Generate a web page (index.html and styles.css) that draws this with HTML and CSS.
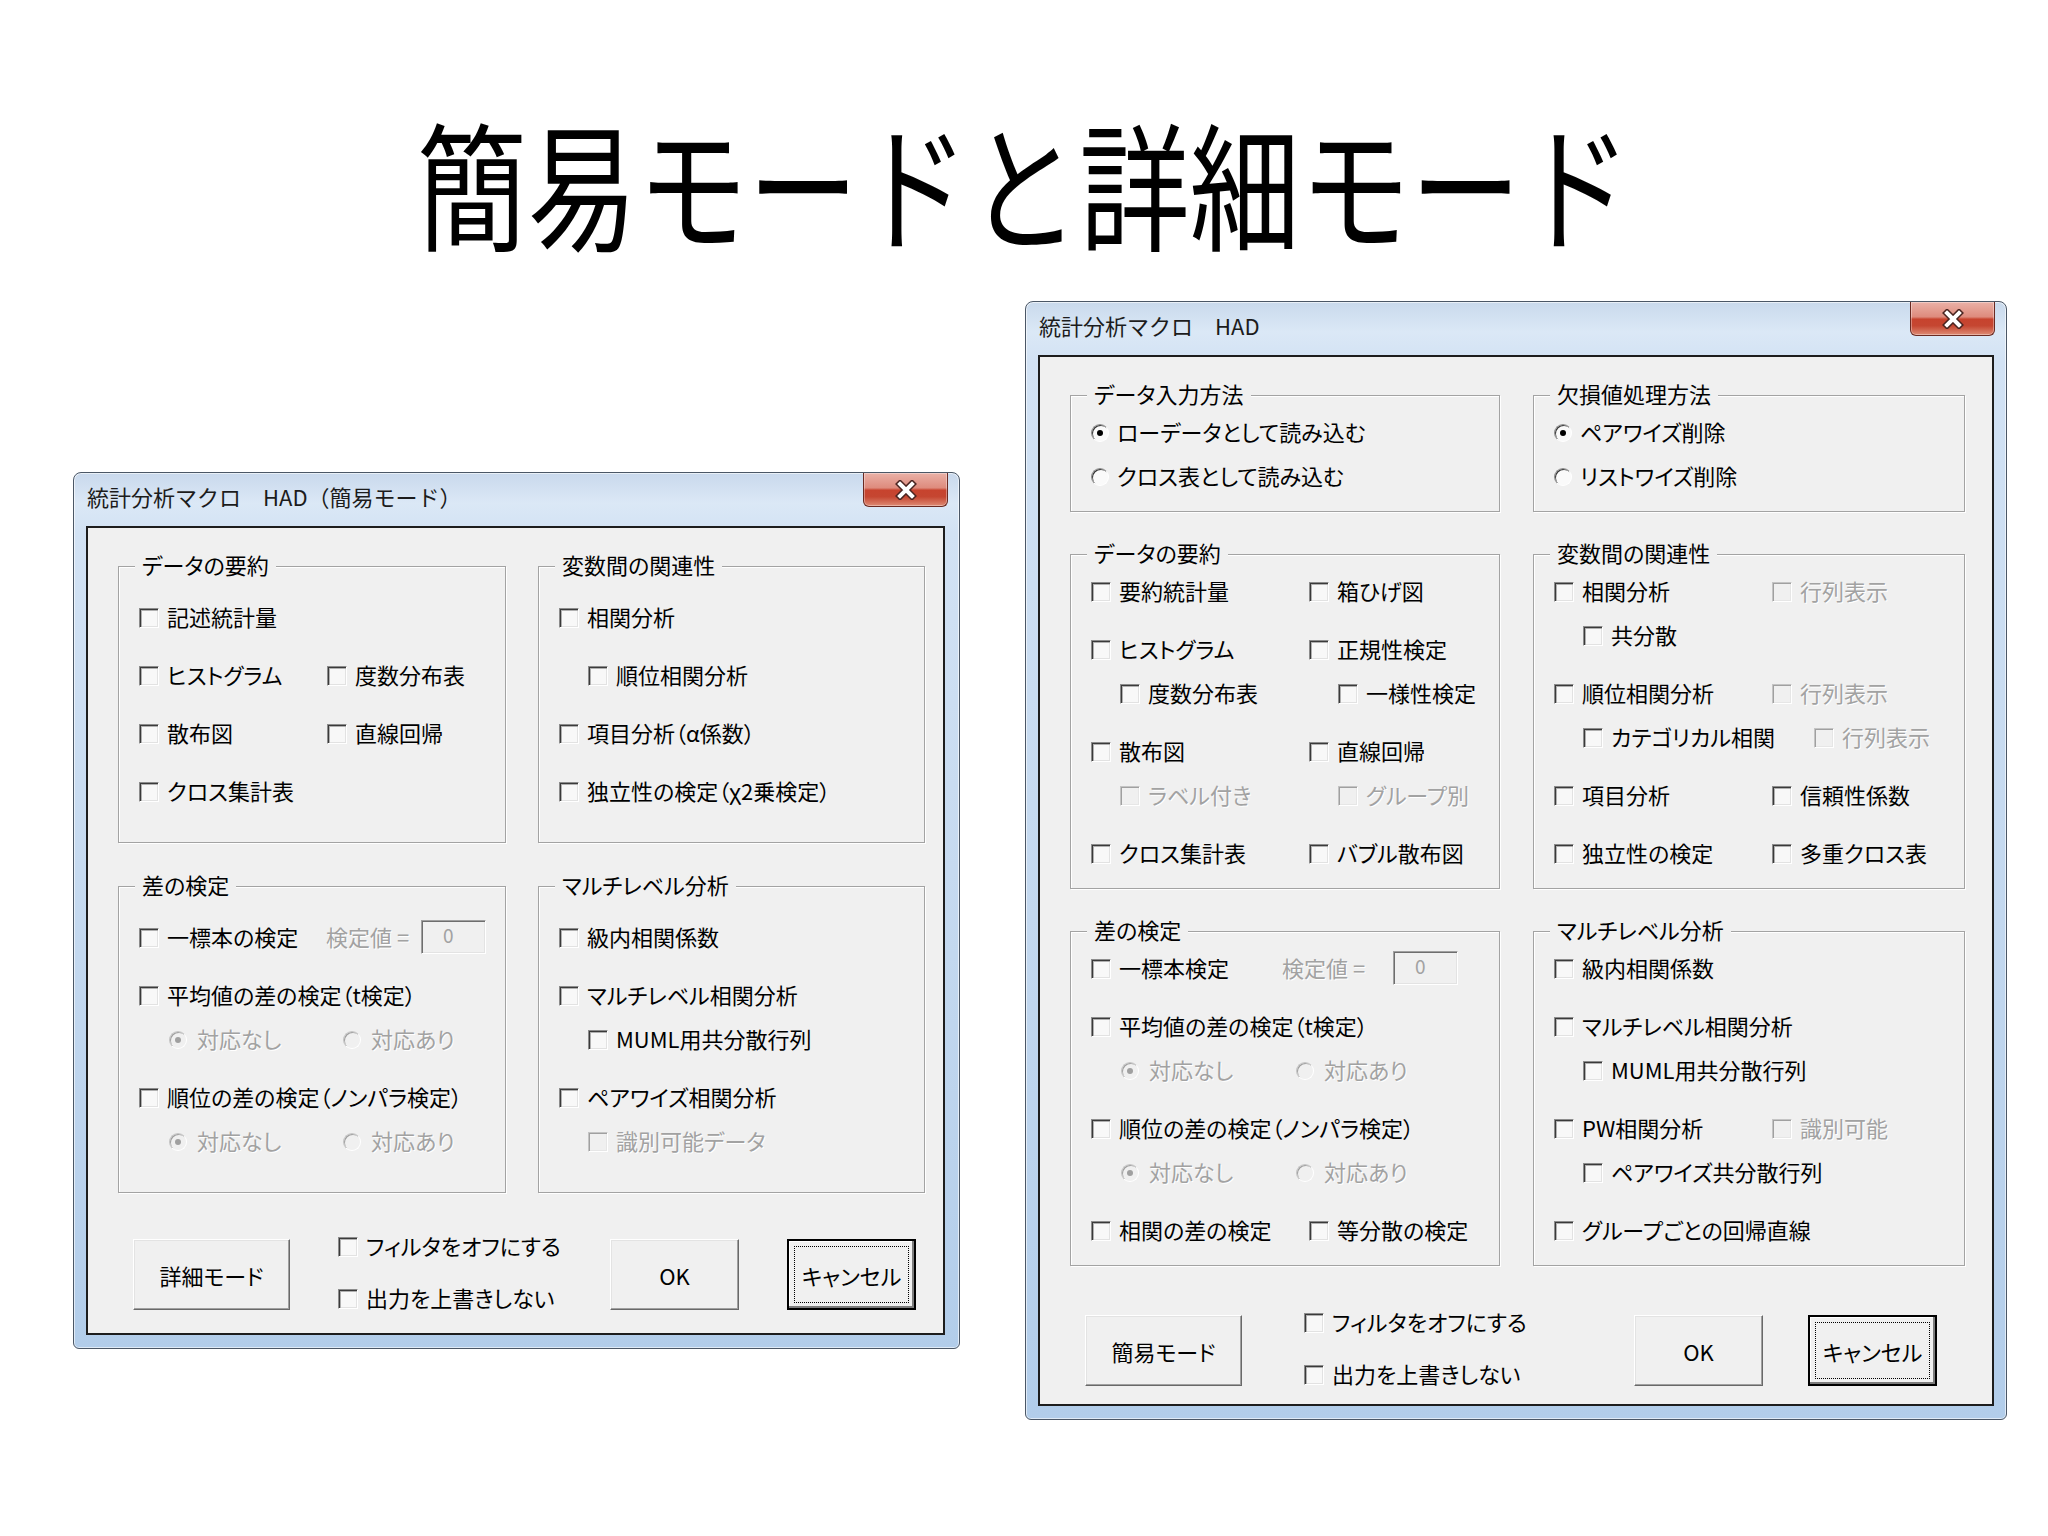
FILE: index.html
```html
<!DOCTYPE html>
<html lang="ja">
<head>
<meta charset="utf-8">
<title>簡易モードと詳細モード</title>
<link rel="stylesheet" href="styles.css">
</head>
<body>
<div class="slide">
  <h1 class="title">簡易モードと詳細モード</h1>
  <div class="stage">

    <!-- 簡易モード -->
    <section class="win win-simple">
      <div class="titlebar">
        <span class="caption">統計分析マクロ　HAD（簡易モード）</span>
        <span class="close"><svg width="24" height="20" viewBox="0 0 24 20"><path d="M6 4 L18 16 M18 4 L6 16" stroke="#4a2420" stroke-width="7" stroke-linecap="square"/><path d="M6 4 L18 16 M18 4 L6 16" stroke="#fff" stroke-width="4" stroke-linecap="square"/></svg></span>
      </div>
      <div class="client">
        <div class="groups">
          <div class="group">
            <div class="legend">データの要約</div>
            <div class="rows">
              <div class="row"><span class="item"><i class="cb"></i>記述統計量</span></div>
              <div class="row sep"><span class="item first"><i class="cb"></i>ヒストグラム</span><span class="item"><i class="cb"></i>度数分布表</span></div>
              <div class="row sep"><span class="item first"><i class="cb"></i>散布図</span><span class="item"><i class="cb"></i>直線回帰</span></div>
              <div class="row sep"><span class="item"><i class="cb"></i>クロス集計表</span></div>
            </div>
          </div>
          <div class="group">
            <div class="legend">変数間の関連性</div>
            <div class="rows">
              <div class="row"><span class="item"><i class="cb"></i>相関分析</span></div>
              <div class="row sep indent"><span class="item"><i class="cb"></i>順位相関分析</span></div>
              <div class="row sep"><span class="item"><i class="cb"></i>項目分析（α係数）</span></div>
              <div class="row sep"><span class="item"><i class="cb"></i>独立性の検定（χ2乗検定）</span></div>
            </div>
          </div>
          <div class="group">
            <div class="legend">差の検定</div>
            <div class="rows">
              <div class="row"><span class="item ktest"><i class="cb"></i>一標本の検定</span><span class="klabel">検定値 =</span><span class="num">0</span></div>
              <div class="row sep"><span class="item"><i class="cb"></i>平均値の差の検定（t検定）</span></div>
              <div class="row radios"><span class="item rfirst off"><i class="rb on"></i>対応なし</span><span class="item off"><i class="rb"></i>対応あり</span></div>
              <div class="row sep"><span class="item"><i class="cb"></i>順位の差の検定（ノンパラ検定）</span></div>
              <div class="row radios"><span class="item rfirst off"><i class="rb on"></i>対応なし</span><span class="item off"><i class="rb"></i>対応あり</span></div>
            </div>
          </div>
          <div class="group">
            <div class="legend">マルチレベル分析</div>
            <div class="rows">
              <div class="row"><span class="item"><i class="cb"></i>級内相関係数</span></div>
              <div class="row sep"><span class="item"><i class="cb"></i>マルチレベル相関分析</span></div>
              <div class="row indent"><span class="item"><i class="cb"></i>MUML用共分散行列</span></div>
              <div class="row sep"><span class="item"><i class="cb"></i>ペアワイズ相関分析</span></div>
              <div class="row indent"><span class="item off"><i class="cb"></i>識別可能データ</span></div>
            </div>
          </div>
        </div>
        <div class="actions">
          <span class="btn">詳細モード</span>
          <div class="opts">
            <span class="item"><i class="cb"></i>フィルタをオフにする</span>
            <span class="item"><i class="cb"></i>出力を上書きしない</span>
          </div>
          <span class="btn small">OK</span>
          <span class="btn small default"><span class="focus">キャンセル</span></span>
        </div>
      </div>
    </section>

    <!-- 詳細モード -->
    <section class="win win-detail">
      <div class="titlebar">
        <span class="caption">統計分析マクロ　HAD</span>
        <span class="close"><svg width="24" height="20" viewBox="0 0 24 20"><path d="M6 4 L18 16 M18 4 L6 16" stroke="#4a2420" stroke-width="7" stroke-linecap="square"/><path d="M6 4 L18 16 M18 4 L6 16" stroke="#fff" stroke-width="4" stroke-linecap="square"/></svg></span>
      </div>
      <div class="client">
        <div class="groups">
          <div class="group">
            <div class="legend">データ入力方法</div>
            <div class="rows">
              <div class="row"><span class="item"><i class="rb on"></i>ローデータとして読み込む</span></div>
              <div class="row"><span class="item"><i class="rb"></i>クロス表として読み込む</span></div>
            </div>
          </div>
          <div class="group">
            <div class="legend">欠損値処理方法</div>
            <div class="rows">
              <div class="row"><span class="item"><i class="rb on"></i>ペアワイズ削除</span></div>
              <div class="row"><span class="item"><i class="rb"></i>リストワイズ削除</span></div>
            </div>
          </div>
          <div class="group">
            <div class="legend">データの要約</div>
            <div class="rows">
              <div class="row"><span class="item first"><i class="cb"></i>要約統計量</span><span class="item"><i class="cb"></i>箱ひげ図</span></div>
              <div class="row sep"><span class="item first"><i class="cb"></i>ヒストグラム</span><span class="item"><i class="cb"></i>正規性検定</span></div>
              <div class="row indent"><span class="item first"><i class="cb"></i>度数分布表</span><span class="item"><i class="cb"></i>一様性検定</span></div>
              <div class="row sep"><span class="item first"><i class="cb"></i>散布図</span><span class="item"><i class="cb"></i>直線回帰</span></div>
              <div class="row indent"><span class="item first off"><i class="cb"></i>ラベル付き</span><span class="item off"><i class="cb"></i>グループ別</span></div>
              <div class="row sep"><span class="item first"><i class="cb"></i>クロス集計表</span><span class="item"><i class="cb"></i>バブル散布図</span></div>
            </div>
          </div>
          <div class="group">
            <div class="legend">変数間の関連性</div>
            <div class="rows">
              <div class="row"><span class="item first"><i class="cb"></i>相関分析</span><span class="item off"><i class="cb"></i>行列表示</span></div>
              <div class="row indent"><span class="item"><i class="cb"></i>共分散</span></div>
              <div class="row sep"><span class="item first"><i class="cb"></i>順位相関分析</span><span class="item off"><i class="cb"></i>行列表示</span></div>
              <div class="row indent"><span class="item first wide"><i class="cb"></i>カテゴリカル相関</span><span class="item off"><i class="cb"></i>行列表示</span></div>
              <div class="row sep"><span class="item first"><i class="cb"></i>項目分析</span><span class="item"><i class="cb"></i>信頼性係数</span></div>
              <div class="row sep"><span class="item first"><i class="cb"></i>独立性の検定</span><span class="item"><i class="cb"></i>多重クロス表</span></div>
            </div>
          </div>
          <div class="group">
            <div class="legend">差の検定</div>
            <div class="rows">
              <div class="row"><span class="item ktest"><i class="cb"></i>一標本検定</span><span class="klabel">検定値 =</span><span class="num">0</span></div>
              <div class="row sep"><span class="item"><i class="cb"></i>平均値の差の検定（t検定）</span></div>
              <div class="row radios"><span class="item rfirst off"><i class="rb on"></i>対応なし</span><span class="item off"><i class="rb"></i>対応あり</span></div>
              <div class="row sep"><span class="item"><i class="cb"></i>順位の差の検定（ノンパラ検定）</span></div>
              <div class="row radios"><span class="item rfirst off"><i class="rb on"></i>対応なし</span><span class="item off"><i class="rb"></i>対応あり</span></div>
              <div class="row sep"><span class="item first"><i class="cb"></i>相関の差の検定</span><span class="item"><i class="cb"></i>等分散の検定</span></div>
            </div>
          </div>
          <div class="group">
            <div class="legend">マルチレベル分析</div>
            <div class="rows">
              <div class="row"><span class="item"><i class="cb"></i>級内相関係数</span></div>
              <div class="row sep"><span class="item"><i class="cb"></i>マルチレベル相関分析</span></div>
              <div class="row indent"><span class="item"><i class="cb"></i>MUML用共分散行列</span></div>
              <div class="row sep"><span class="item first"><i class="cb"></i>PW相関分析</span><span class="item off"><i class="cb"></i>識別可能</span></div>
              <div class="row indent"><span class="item"><i class="cb"></i>ペアワイズ共分散行列</span></div>
              <div class="row sep"><span class="item"><i class="cb"></i>グループごとの回帰直線</span></div>
            </div>
          </div>
        </div>
        <div class="actions">
          <span class="btn">簡易モード</span>
          <div class="opts">
            <span class="item"><i class="cb"></i>フィルタをオフにする</span>
            <span class="item"><i class="cb"></i>出力を上書きしない</span>
          </div>
          <span class="btn small">OK</span>
          <span class="btn small default"><span class="focus">キャンセル</span></span>
        </div>
      </div>
    </section>

  </div>
</div>
</body>
</html>
```

FILE: styles.css
```css
* { box-sizing: border-box; }

html, body {
  margin: 0;
  background: #ffffff;
}

body {
  width: 2048px;
  height: 1536px;
  overflow: hidden;
  font-family: "Noto Sans CJK JP", "Noto Sans", sans-serif;
  color: #000;
}

.slide {
  width: 2048px;
  height: 1536px;
}

/* ---------- slide title ---------- */
.title {
  margin: 0;
  height: 267px;
  padding-top: 100px;
  font-size: 138px;
  line-height: 160px;
  font-weight: 400;
  text-align: center;
  transform: scaleX(0.8);
}

.stage {
  display: flex;
  align-items: flex-start;
  margin-top: 34px;
}

/* ---------- window frame ---------- */
.win {
  flex: none;
  border: 1px solid #4b5766;
  border-radius: 8px 8px 6px 6px;
  background: linear-gradient(#c9d9ec 0, #dbe8f6 30px, #d2e2f4 60px, #c3d8ef 55%, #b2cdea 100%);
  box-shadow: inset 0 0 0 1px rgba(255, 255, 255, 0.6);
  padding-bottom: 13px;
  font-size: 22px;
  font-feature-settings: "palt";
  --row-top: 16px;
  --row-bottom: 30px;
}

.win-simple {
  width: 887px;
  margin: 171px 0 0 73px;
  --col: 188px;
  --col-wide: 188px;
  --kcol: 187px;
  --klabel: 95px;
  --rcol: 174px;
  --g1: 388px;
  --g2: 387px;
  --cg: 32px;
  --opt-ml: 48px;
  --opt-w: 272px;
  --cancel-ml: 48px;
  --act-top: 30px;
}

.win-detail {
  width: 982px;
  margin-left: 65px;
  --row-top: 2px;
  --row-bottom: 14px;
  --col: 218px;
  --col-wide: 231px;
  --kcol: 191px;
  --klabel: 111px;
  --rcol: 175px;
  --g1: 430px;
  --g2: 432px;
  --cg: 33px;
  --opt-ml: 62px;
  --opt-w: 330px;
  --cancel-ml: 45px;
  --act-top: 33px;
}

.titlebar {
  height: 53px;
  display: flex;
  justify-content: space-between;
  align-items: flex-start;
  padding-left: 13px;
}

.caption {
  font-size: 22px;
  line-height: 46px;
  color: #1c1c1c;
  font-feature-settings: normal;
}

.close {
  width: 85px;
  height: 34px;
  margin-right: 11px;
  display: flex;
  align-items: center;
  justify-content: center;
  border: 1px solid #6a2a22;
  border-top: none;
  border-radius: 0 0 6px 6px;
  background: linear-gradient(#eab1a7 0%, #de8b7d 45%, #c7432e 52%, #c54631 72%, #de8b74 100%);
  box-shadow: inset 0 0 0 1px rgba(255, 255, 255, 0.35);
}

/* ---------- client area ---------- */
.client {
  margin: 0 14px 0 12px;
  border: 2px solid #1d1d1d;
  background: #f0f0f0;
  padding: 38px 18px 14px 30px;
}

.win-detail .client {
  margin: 0 12px;
  padding: 38px 27px 9px 30px;
}

.groups {
  display: grid;
  grid-template-columns: var(--g1) var(--g2);
  column-gap: var(--cg);
  row-gap: 43px;
}

.win-detail .groups { row-gap: 42px; }

.group {
  border: 1px solid #a3a3a3;
  box-shadow: inset 1px 1px 0 #fff, 1px 1px 0 #fff;
}

.legend {
  width: fit-content;
  height: 24px;
  line-height: 21px;
  margin: -13px 0 0 16px;
  padding: 0 7px;
  background: #f0f0f0;
  white-space: nowrap;
}

.rows {
  padding: var(--row-top) 0 var(--row-bottom);
}

.row {
  display: flex;
  align-items: center;
  height: 44px;
  padding-left: 20px;
}

.row.sep { margin-top: 14px; }
.row.indent { padding-left: 49px; }
.row.radios { padding-left: 50px; }

.item {
  display: flex;
  align-items: center;
  gap: 8px;
  white-space: nowrap;
  line-height: 1;
}

.item.first { width: var(--col); flex: none; }
.item.first.wide { width: var(--col-wide); }
.item.ktest { width: var(--kcol); flex: none; }
.item.rfirst { width: var(--rcol); flex: none; }
.row.radios .item { gap: 10px; }

.off { color: #a2a2a2; text-shadow: 1px 1px 0 #fff; }

/* checkbox */
.cb {
  flex: none;
  width: 20px;
  height: 20px;
  margin-top: 3px;
  border: 1px solid;
  border-color: #8c8c8c #fff #fff #8c8c8c;
  box-shadow: inset 1px 1px 0 #3a3a3a, inset 2px 2px 0 #b0b0b0, inset -1px -1px 0 #e2e2e2;
  background: #f8f8f8;
}

.off .cb {
  border-color: #c4c4c4 #fff #fff #c4c4c4;
  box-shadow: inset 1px 1px 0 #a0a0a0, inset -1px -1px 0 #e6e6e6;
  background: #f0f0f0;
}

/* radio */
.item .rb {
  flex: none;
  width: 18px;
  height: 18px;
  margin-top: 3px;
  border-radius: 50%;
  border: 1px solid;
  border-color: #8c8c8c #fff #fff #8c8c8c;
  box-shadow: inset 1px 1px 0 #3a3a3a;
  background: #fafafa;
  display: flex;
  align-items: center;
  justify-content: center;
}

.rb.on::after {
  content: "";
  width: 6px;
  height: 6px;
  border-radius: 50%;
  background: #000;
}

.off .rb {
  border-color: #c4c4c4 #fff #fff #c4c4c4;
  box-shadow: inset 1px 1px 0 #a0a0a0;
  background: #f0f0f0;
}

.off .rb.on::after { background: #a0a0a0; }

/* 検定値 */
.klabel {
  width: var(--klabel);
  flex: none;
  color: #a2a2a2;
  text-shadow: 1px 1px 0 #fff;
  white-space: nowrap;
  line-height: 1;
}

.num {
  flex: none;
  width: 65px;
  height: 34px;
  margin-top: 2px;
  border: 1px solid;
  border-color: #a0a0a0 #fff #fff #a0a0a0;
  box-shadow: inset 1px 1px 0 #6e6e6e, inset -1px -1px 0 #e3e3e3;
  background: #f0f0f0;
  padding-left: 21px;
  font-size: 19px;
  line-height: 28px;
  color: #a2a2a2;
}

/* ---------- bottom buttons ---------- */
.actions {
  display: flex;
  align-items: flex-start;
  height: 96px;
  margin-top: var(--act-top);
  padding-left: 15px;
}

.btn {
  flex: none;
  width: 157px;
  height: 71px;
  margin-top: 16px;
  display: flex;
  align-items: center;
  justify-content: center;
  border: 1px solid;
  border-color: #fff #696969 #696969 #fff;
  box-shadow: inset -1px -1px 0 #a0a0a0, inset 1px 1px 0 #e3e3e3;
  background: #f0f0f0;
  line-height: 1;
}

.btn.small { width: 129px; }

.btn.default {
  margin-left: var(--cancel-ml);
  border: 2px solid #000;
  padding: 5px;
  box-shadow: inset -2px -2px 0 #7d7d7d, inset 1px 1px 0 #fff;
}

.focus {
  flex: 1;
  align-self: stretch;
  display: flex;
  align-items: center;
  justify-content: center;
  border: 1px dotted #000;
}

.opts {
  flex: none;
  width: var(--opt-w);
  margin-left: var(--opt-ml);
  display: flex;
  flex-direction: column;
  gap: 8px;
}

.opts .item { height: 44px; }
```
